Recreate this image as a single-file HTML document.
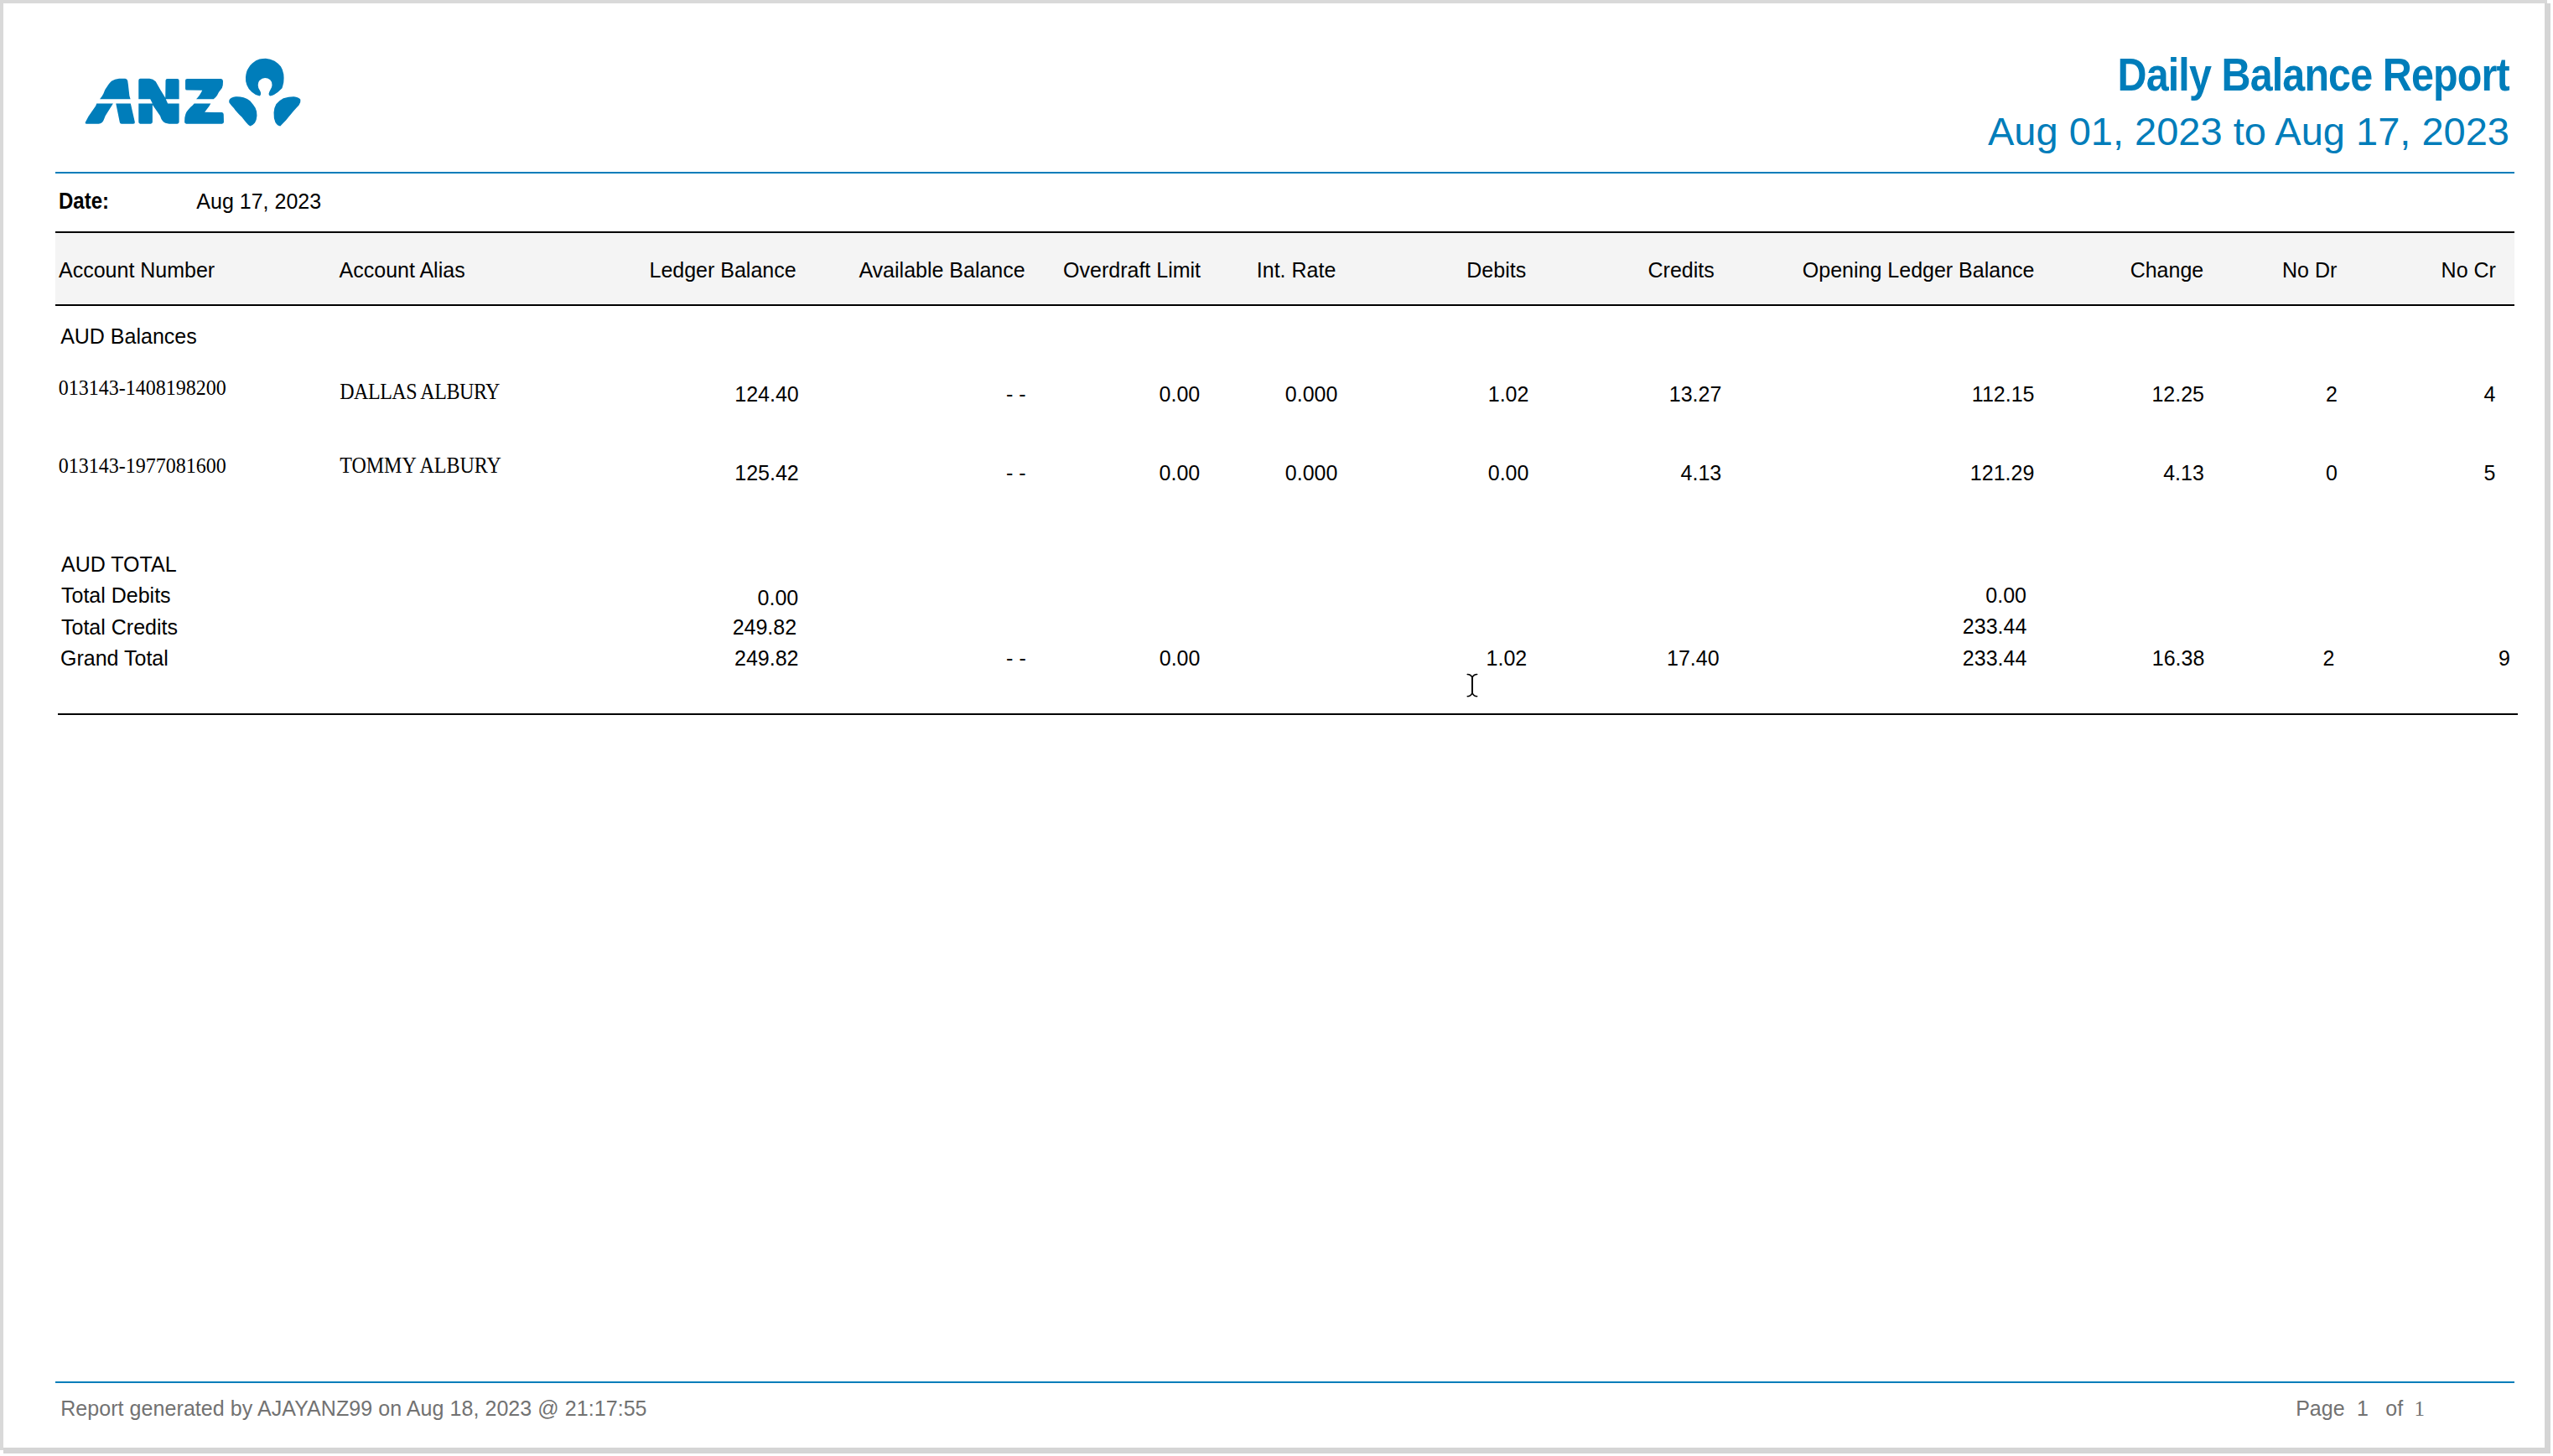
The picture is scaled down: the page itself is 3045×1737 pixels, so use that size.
<!DOCTYPE html>
<html><head><meta charset="utf-8"><title>Daily Balance Report</title>
<style>
html,body{margin:0;padding:0;background:#fff;}
body{width:3045px;height:1737px;position:relative;overflow:hidden;font-family:'Liberation Sans', sans-serif;}
.t{position:absolute;white-space:nowrap;line-height:1;}
.r{position:absolute;}
</style></head><body>
<div class="r" style="left:0;top:0;width:3038px;height:1730px;background:#d9d9d9"></div>
<div class="r" style="left:4px;top:4px;width:3038px;height:1730px;background:#d5d5d5"></div>
<div class="r" style="left:4px;top:4px;width:3031px;height:1723px;background:#fff"></div>
<svg class="r" style="left:0;top:0" width="400" height="200" viewBox="0 0 400 200">
<g fill="#007dba">
<g transform="translate(95,85) scale(0.0480769)">
<path d="M500,690 L1260,690 L1235,610 L1205,340 L1190,235 Q1175,190 1130,183 L980,180 Q870,190 790,245 Q745,285 720,325 L630,460 L590,555 Q560,620 500,690 Z"/>
<path d="M420,800 L830,800 L640,1100 L600,1200 Q570,1290 470,1305 L170,1305 Q125,1300 140,1270 L220,1120 L400,860 Z"/>
<path d="M900,800 L1265,800 L1370,1265 Q1375,1305 1330,1305 L1040,1305 Q1000,1300 995,1270 Z"/>
</g>
<g transform="translate(160,85) scale(0.0480769)">
<path d="M110,230 Q110,183 155,183 L380,180 Q470,185 535,255 L650,460 L775,660 L780,230 Q780,185 825,185 L1070,185 Q1115,185 1115,230 L1115,1260 Q1115,1305 1070,1305 L870,1305 Q760,1300 710,1240 Q670,1200 645,1110 L455,830 L455,1260 Q455,1305 410,1305 L150,1305 Q110,1305 110,1260 Z"/>
<path fill="#fff" d="M60,690 L400,690 L455,800 L60,800 Z"/>
<path fill="#fff" d="M785,690 L1130,690 L1130,800 L835,800 Z"/>
<path d="M1270,230 Q1270,185 1315,185 L2160,185 Q2205,190 2205,250 L2200,350 Q2190,420 2140,470 L2100,520 L2060,600 Q2020,660 1970,690 L1540,690 Q1620,620 1690,475 L1310,470 Q1270,470 1270,430 Z"/>
<path d="M1490,800 L1900,800 L1860,870 L1750,1015 L2175,1020 Q2220,1025 2220,1070 L2225,1260 Q2225,1305 2180,1305 L1295,1305 Q1250,1305 1250,1260 L1255,1150 Q1270,1060 1300,1010 Q1350,940 1400,890 Q1450,850 1490,800 Z"/>
</g>
<g transform="translate(270,65) scale(0.0618047)">
<path d="M640,800 Q560,790 490,725 Q420,660 395,590 Q365,510 372,440 Q380,330 420,270 Q460,200 500,170 Q570,110 640,90 Q700,75 760,75 Q850,80 930,125 Q1000,170 1050,230 Q1090,290 1105,380 Q1115,450 1105,540 Q1090,610 1075,650 Q1000,730 920,775 Q880,795 845,800 Q815,790 818,755 Q825,720 850,680 Q880,640 882,590 Q880,520 845,490 Q800,455 745,455 Q690,455 640,500 Q610,530 610,590 Q612,650 645,690 Q665,720 665,760 Q660,800 640,800 Z"/>
<path d="M60,870 Q90,825 180,815 Q250,810 330,830 Q410,850 460,900 Q520,970 560,1030 Q595,1100 590,1180 Q585,1260 550,1320 Q510,1370 460,1385 Q420,1360 380,1310 Q320,1240 300,1210 Q250,1160 230,1140 Q160,1060 140,1030 Q90,980 55,930 Q45,900 60,870 Z"/>
<path d="M1430,870 Q1400,825 1300,815 Q1200,815 1100,845 Q1010,890 960,960 Q920,1030 915,1120 Q910,1230 945,1310 Q985,1375 1040,1385 Q1080,1340 1150,1270 Q1250,1150 1300,1090 Q1360,1020 1400,980 Q1440,920 1430,870 Z"/>
</g>
</g>
</svg>

<div class="r" style="left:66px;top:205px;width:2933px;height:2px;background:#007dba"></div>
<div class="r" style="left:66px;top:276px;width:2933px;height:2px;background:#000"></div>
<div class="r" style="left:66px;top:278px;width:2933px;height:85px;background:#f4f4f4"></div>
<div class="r" style="left:66px;top:363px;width:2933px;height:2px;background:#000"></div>
<div class="r" style="left:69px;top:851px;width:2934px;height:2px;background:#000"></div>
<div class="r" style="left:66px;top:1648px;width:2933px;height:2px;background:#007dba"></div>
<div class="t" id="title" style="left:2525.55px;top:66.70px;font-family:'Liberation Sans', sans-serif;font-weight:bold;font-size:48.5px;color:#007dba;letter-spacing:-0.9px;transform:scaleY(1.128);transform-origin:0 80%;">Daily Balance Report</div>
<div class="t" id="range" style="left:2370.96px;top:132.77px;font-family:'Liberation Sans', sans-serif;font-weight:normal;font-size:47px;color:#007dba;">Aug 01, 2023 to Aug 17, 2023</div>
<div class="t" id="datelbl" style="left:70.00px;top:228.99px;font-family:'Liberation Sans', sans-serif;font-weight:bold;font-size:24px;color:#000;transform:scaleY(1.14);transform-origin:0 80%;">Date:</div>
<div class="t" id="dateval" style="left:234.37px;top:227.87px;font-family:'Liberation Sans', sans-serif;font-weight:normal;font-size:25px;color:#000;">Aug 17, 2023</div>
<div class="t" id="h_acc" style="left:70.00px;top:310.00px;font-family:'Liberation Sans', sans-serif;font-weight:normal;font-size:25px;color:#000;">Account Number</div>
<div class="t" id="h_alias" style="left:404.55px;top:310.00px;font-family:'Liberation Sans', sans-serif;font-weight:normal;font-size:25px;color:#000;">Account Alias</div>
<div class="t" id="h_ledger" style="left:774.50px;top:310.00px;font-family:'Liberation Sans', sans-serif;font-weight:normal;font-size:25px;color:#000;">Ledger Balance</div>
<div class="t" id="h_avail" style="left:1024.40px;top:310.00px;font-family:'Liberation Sans', sans-serif;font-weight:normal;font-size:25px;color:#000;">Available Balance</div>
<div class="t" id="h_od" style="left:1268.12px;top:310.00px;font-family:'Liberation Sans', sans-serif;font-weight:normal;font-size:25px;color:#000;">Overdraft Limit</div>
<div class="t" id="h_int" style="left:1498.80px;top:310.00px;font-family:'Liberation Sans', sans-serif;font-weight:normal;font-size:25px;color:#000;">Int. Rate</div>
<div class="t" id="h_deb" style="left:1749.27px;top:310.00px;font-family:'Liberation Sans', sans-serif;font-weight:normal;font-size:25px;color:#000;">Debits</div>
<div class="t" id="h_cred" style="left:1965.52px;top:310.00px;font-family:'Liberation Sans', sans-serif;font-weight:normal;font-size:25px;color:#000;">Credits</div>
<div class="t" id="h_open" style="left:2149.87px;top:310.00px;font-family:'Liberation Sans', sans-serif;font-weight:normal;font-size:25px;color:#000;">Opening Ledger Balance</div>
<div class="t" id="h_chg" style="left:2540.67px;top:310.00px;font-family:'Liberation Sans', sans-serif;font-weight:normal;font-size:25px;color:#000;">Change</div>
<div class="t" id="h_nodr" style="left:2721.99px;top:310.00px;font-family:'Liberation Sans', sans-serif;font-weight:normal;font-size:25px;color:#000;">No Dr</div>
<div class="t" id="h_nocr" style="left:2911.62px;top:310.00px;font-family:'Liberation Sans', sans-serif;font-weight:normal;font-size:25px;color:#000;">No Cr</div>
<div class="t" id="audbal" style="left:72.15px;top:388.55px;font-family:'Liberation Sans', sans-serif;font-weight:normal;font-size:25px;color:#000;">AUD Balances</div>
<div class="t" id="r1acc" style="left:69.77px;top:450.66px;font-family:'Liberation Serif', serif;font-weight:normal;font-size:24px;color:#000;transform:scaleY(1.06);transform-origin:0 80%;">013143-1408198200</div>
<div class="t" id="r1alias" style="left:405.17px;top:455.66px;font-family:'Liberation Serif', serif;font-weight:normal;font-size:24px;color:#000;letter-spacing:-0.45px;transform:scaleY(1.12);transform-origin:0 80%;">DALLAS ALBURY</div>
<div class="t" id="r1c0" style="left:876.27px;top:457.66px;font-family:'Liberation Sans', sans-serif;font-weight:normal;font-size:25px;color:#000;">124.40</div>
<div class="t" id="r1c1" style="left:1199.90px;top:457.66px;font-family:'Liberation Sans', sans-serif;font-weight:normal;font-size:25px;color:#000;">- -</div>
<div class="t" id="r1c2" style="left:1382.55px;top:457.66px;font-family:'Liberation Sans', sans-serif;font-weight:normal;font-size:25px;color:#000;">0.00</div>
<div class="t" id="r1c3" style="left:1532.80px;top:457.66px;font-family:'Liberation Sans', sans-serif;font-weight:normal;font-size:25px;color:#000;">0.000</div>
<div class="t" id="r1c4" style="left:1774.77px;top:457.66px;font-family:'Liberation Sans', sans-serif;font-weight:normal;font-size:25px;color:#000;">1.02</div>
<div class="t" id="r1c5" style="left:1990.80px;top:457.66px;font-family:'Liberation Sans', sans-serif;font-weight:normal;font-size:25px;color:#000;">13.27</div>
<div class="t" id="r1c6" style="left:2351.87px;top:457.66px;font-family:'Liberation Sans', sans-serif;font-weight:normal;font-size:25px;color:#000;">112.15</div>
<div class="t" id="r1c7" style="left:2566.42px;top:457.66px;font-family:'Liberation Sans', sans-serif;font-weight:normal;font-size:25px;color:#000;">12.25</div>
<div class="t" id="r1c8" style="left:2773.99px;top:457.66px;font-family:'Liberation Sans', sans-serif;font-weight:normal;font-size:25px;color:#000;">2</div>
<div class="t" id="r1c9" style="left:2962.62px;top:457.66px;font-family:'Liberation Sans', sans-serif;font-weight:normal;font-size:25px;color:#000;">4</div>
<div class="t" id="r2acc" style="left:69.77px;top:544.00px;font-family:'Liberation Serif', serif;font-weight:normal;font-size:24px;color:#000;transform:scaleY(1.06);transform-origin:0 80%;">013143-1977081600</div>
<div class="t" id="r2alias" style="left:405.17px;top:544.28px;font-family:'Liberation Serif', serif;font-weight:normal;font-size:24px;color:#000;transform:scaleY(1.12);transform-origin:0 80%;">TOMMY ALBURY</div>
<div class="t" id="r2c0" style="left:876.27px;top:551.66px;font-family:'Liberation Sans', sans-serif;font-weight:normal;font-size:25px;color:#000;">125.42</div>
<div class="t" id="r2c1" style="left:1199.90px;top:551.66px;font-family:'Liberation Sans', sans-serif;font-weight:normal;font-size:25px;color:#000;">- -</div>
<div class="t" id="r2c2" style="left:1382.55px;top:551.66px;font-family:'Liberation Sans', sans-serif;font-weight:normal;font-size:25px;color:#000;">0.00</div>
<div class="t" id="r2c3" style="left:1532.80px;top:551.66px;font-family:'Liberation Sans', sans-serif;font-weight:normal;font-size:25px;color:#000;">0.000</div>
<div class="t" id="r2c4" style="left:1774.77px;top:551.66px;font-family:'Liberation Sans', sans-serif;font-weight:normal;font-size:25px;color:#000;">0.00</div>
<div class="t" id="r2c5" style="left:2004.55px;top:551.66px;font-family:'Liberation Sans', sans-serif;font-weight:normal;font-size:25px;color:#000;">4.13</div>
<div class="t" id="r2c6" style="left:2349.87px;top:551.66px;font-family:'Liberation Sans', sans-serif;font-weight:normal;font-size:25px;color:#000;">121.29</div>
<div class="t" id="r2c7" style="left:2580.17px;top:551.66px;font-family:'Liberation Sans', sans-serif;font-weight:normal;font-size:25px;color:#000;">4.13</div>
<div class="t" id="r2c8" style="left:2773.99px;top:551.66px;font-family:'Liberation Sans', sans-serif;font-weight:normal;font-size:25px;color:#000;">0</div>
<div class="t" id="r2c9" style="left:2962.62px;top:551.66px;font-family:'Liberation Sans', sans-serif;font-weight:normal;font-size:25px;color:#000;">5</div>
<div class="t" id="audtot" style="left:73.00px;top:661.36px;font-family:'Liberation Sans', sans-serif;font-weight:normal;font-size:25px;color:#000;">AUD TOTAL</div>
<div class="t" id="totdeb" style="left:73.00px;top:697.86px;font-family:'Liberation Sans', sans-serif;font-weight:normal;font-size:25px;color:#000;">Total Debits</div>
<div class="t" id="totdeb_v" style="left:903.55px;top:700.66px;font-family:'Liberation Sans', sans-serif;font-weight:normal;font-size:25px;color:#000;">0.00</div>
<div class="t" id="totdeb_o" style="left:2368.37px;top:697.66px;font-family:'Liberation Sans', sans-serif;font-weight:normal;font-size:25px;color:#000;">0.00</div>
<div class="t" id="totcred" style="left:73.00px;top:735.50px;font-family:'Liberation Sans', sans-serif;font-weight:normal;font-size:25px;color:#000;">Total Credits</div>
<div class="t" id="totcred_v" style="left:873.65px;top:735.50px;font-family:'Liberation Sans', sans-serif;font-weight:normal;font-size:25px;color:#000;">249.82</div>
<div class="t" id="totcred_o" style="left:2340.87px;top:734.86px;font-family:'Liberation Sans', sans-serif;font-weight:normal;font-size:25px;color:#000;">233.44</div>
<div class="t" id="grand" style="left:72.00px;top:773.07px;font-family:'Liberation Sans', sans-serif;font-weight:normal;font-size:25px;color:#000;">Grand Total</div>
<div class="t" id="g_led" style="left:876.05px;top:773.16px;font-family:'Liberation Sans', sans-serif;font-weight:normal;font-size:25px;color:#000;">249.82</div>
<div class="t" id="g_avail" style="left:1200.12px;top:773.16px;font-family:'Liberation Sans', sans-serif;font-weight:normal;font-size:25px;color:#000;">- -</div>
<div class="t" id="g_od" style="left:1382.77px;top:773.16px;font-family:'Liberation Sans', sans-serif;font-weight:normal;font-size:25px;color:#000;">0.00</div>
<div class="t" id="g_deb" style="left:1772.55px;top:773.16px;font-family:'Liberation Sans', sans-serif;font-weight:normal;font-size:25px;color:#000;">1.02</div>
<div class="t" id="g_cred" style="left:1987.99px;top:773.16px;font-family:'Liberation Sans', sans-serif;font-weight:normal;font-size:25px;color:#000;">17.40</div>
<div class="t" id="g_open" style="left:2340.87px;top:773.16px;font-family:'Liberation Sans', sans-serif;font-weight:normal;font-size:25px;color:#000;">233.44</div>
<div class="t" id="g_chg" style="left:2566.80px;top:773.16px;font-family:'Liberation Sans', sans-serif;font-weight:normal;font-size:25px;color:#000;">16.38</div>
<div class="t" id="g_nodr" style="left:2770.62px;top:773.16px;font-family:'Liberation Sans', sans-serif;font-weight:normal;font-size:25px;color:#000;">2</div>
<div class="t" id="g_nocr" style="left:2979.99px;top:773.16px;font-family:'Liberation Sans', sans-serif;font-weight:normal;font-size:25px;color:#000;">9</div>
<div class="t" id="foot" style="left:72.20px;top:1668.00px;font-family:'Liberation Sans', sans-serif;font-weight:normal;font-size:25px;color:#727272;letter-spacing:0.065px;">Report generated by AJAYANZ99 on Aug 18, 2023 @ 21:17:55</div>
<div class="t" id="pg1" style="left:2738.17px;top:1667.86px;font-family:'Liberation Sans', sans-serif;font-weight:normal;font-size:25px;color:#727272;">Page</div>
<div class="t" id="pg2" style="left:2811.00px;top:1667.86px;font-family:'Liberation Sans', sans-serif;font-weight:normal;font-size:25px;color:#727272;">1</div>
<div class="t" id="pg3" style="left:2845.37px;top:1667.86px;font-family:'Liberation Sans', sans-serif;font-weight:normal;font-size:25px;color:#727272;">of</div>
<div class="t" id="pg4" style="left:2879.55px;top:1667.86px;font-family:'Liberation Serif', serif;font-weight:normal;font-size:25px;color:#727272;">1</div>
<svg class="r" style="left:1740px;top:798px" width="32" height="40" viewBox="0 0 32 40"><rect x="15" y="8.6" width="2" height="19.4" fill="#000"/><g fill="none" stroke="#000" stroke-width="1.5" stroke-linecap="round"><path d="M10.2,6.5 Q14.5,6.5 16,10.5"/><path d="M21.7,6.5 Q17.5,6.5 16,10.5"/><path d="M10.2,32.7 Q14.5,32.7 16,28.5"/><path d="M21.7,32.7 Q17.5,32.7 16,28.5"/></g></svg>
</body></html>
